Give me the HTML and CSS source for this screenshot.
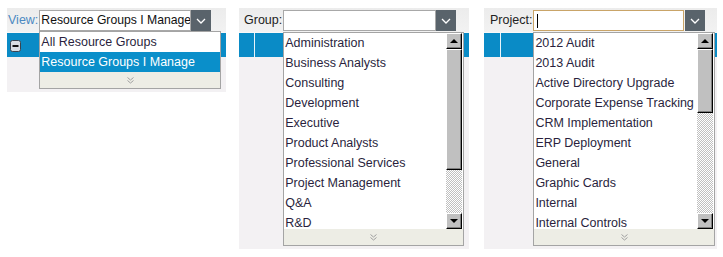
FILE: index.html
```html
<!DOCTYPE html>
<html lang="en">
<head>
    <meta charset="UTF-8">
    <title>Resource filters</title>
    <link rel="stylesheet" href="styles.css">
</head>
<body>
    <div class="page">
        <!-- view picker -->
        <div class="panel panel-view">
            <div class="toolbar">
                <span class="label label-view">View:</span>
                <div class="combo">
                    <div class="combo-input">Resource Groups I Manage</div>
                    <div class="combo-btn">
                        <svg width="10" height="6" viewBox="0 0 10 6"><path d="M1 1 L5 5 L9 1" fill="none" stroke="#fff" stroke-width="1.3"/></svg>
                    </div>
                    <div class="dropdown dropdown-view">
                        <div class="item">All Resource Groups</div>
                        <div class="item selected">Resource Groups I Manage</div>
                        <div class="more">
                            <svg width="7" height="7" viewBox="0 0 7 7"><path d="M0.5 0.5 L3.5 3 L6.5 0.5 M0.5 3.5 L3.5 6 L6.5 3.5" fill="none" stroke="#a0a0a0" stroke-width="1"/></svg>
                        </div>
                    </div>
                </div>
            </div>
            <div class="grid-row">
                <svg class="toggle" width="11" height="12" viewBox="0 0 11 12">
                    <rect x="0.5" y="0.5" width="10" height="11" rx="2" fill="#d8dde2" stroke="#3a4450"/>
                    <rect x="2.5" y="5" width="6" height="2" fill="#111"/>
                </svg>
            </div>
            <div class="panel-body short"></div>
        </div>

        <!-- group picker -->
        <div class="panel panel-group">
            <div class="toolbar">
                <span class="label">Group:</span>
                <div class="combo">
                    <div class="combo-input"></div>
                    <div class="combo-btn">
                        <svg width="10" height="6" viewBox="0 0 10 6"><path d="M1 1 L5 5 L9 1" fill="none" stroke="#fff" stroke-width="1.3"/></svg>
                    </div>
                    <div class="dropdown dropdown-list">
                        <div class="list-wrap">
                            <div class="list">
                                <div class="item">Administration</div>
                                <div class="item">Business Analysts</div>
                                <div class="item">Consulting</div>
                                <div class="item">Development</div>
                                <div class="item">Executive</div>
                                <div class="item">Product Analysts</div>
                                <div class="item">Professional Services</div>
                                <div class="item">Project Management</div>
                                <div class="item">Q&amp;A</div>
                                <div class="item">R&amp;D</div>
                            </div>
                            <div class="scrollbar">
                                <div class="sb-btn"><span class="arrow-up"></span></div>
                                <div class="sb-thumb thumb-group"></div>
                                <div class="sb-track"></div>
                                <div class="sb-btn"><span class="arrow-down"></span></div>
                            </div>
                        </div>
                        <div class="more">
                            <svg width="7" height="7" viewBox="0 0 7 7"><path d="M0.5 0.5 L3.5 3 L6.5 0.5 M0.5 3.5 L3.5 6 L6.5 3.5" fill="none" stroke="#a0a0a0" stroke-width="1"/></svg>
                        </div>
                    </div>
                </div>
            </div>
            <div class="grid-row"><span class="cell-first"></span></div>
            <div class="panel-body tall"></div>
        </div>

        <!-- project picker -->
        <div class="panel panel-project">
            <div class="toolbar">
                <span class="label">Project:</span>
                <div class="combo">
                    <div class="combo-input focused"><span class="caret"></span></div>
                    <div class="combo-btn">
                        <svg width="10" height="6" viewBox="0 0 10 6"><path d="M1 1 L5 5 L9 1" fill="none" stroke="#fff" stroke-width="1.3"/></svg>
                    </div>
                    <div class="dropdown dropdown-list">
                        <div class="list-wrap">
                            <div class="list">
                                <div class="item">2012 Audit</div>
                                <div class="item">2013 Audit</div>
                                <div class="item">Active Directory Upgrade</div>
                                <div class="item">Corporate Expense Tracking</div>
                                <div class="item">CRM Implementation</div>
                                <div class="item">ERP Deployment</div>
                                <div class="item">General</div>
                                <div class="item">Graphic Cards</div>
                                <div class="item">Internal</div>
                                <div class="item">Internal Controls</div>
                            </div>
                            <div class="scrollbar">
                                <div class="sb-btn"><span class="arrow-up"></span></div>
                                <div class="sb-thumb thumb-project"></div>
                                <div class="sb-track"></div>
                                <div class="sb-btn"><span class="arrow-down"></span></div>
                            </div>
                        </div>
                        <div class="more">
                            <svg width="7" height="7" viewBox="0 0 7 7"><path d="M0.5 0.5 L3.5 3 L6.5 0.5 M0.5 3.5 L3.5 6 L6.5 3.5" fill="none" stroke="#a0a0a0" stroke-width="1"/></svg>
                        </div>
                    </div>
                </div>
            </div>
            <div class="grid-row"><span class="cell-first"></span></div>
            <div class="panel-body tall"></div>
        </div>
    </div>
</body>
</html>
```

FILE: styles.css
```css
body{
    margin: 0;
    background-color: white;
    font-family: "Liberation Sans", Arial, sans-serif;
    font-size: 12px;
    color: #2a1f3d;
}
.page{
    display: flex;
    align-items: flex-start;
    padding: 8px 0 0 7px;
}
.panel{
    display: flex;
    flex-direction: column;
}
.panel-view{
    width: 219px;
}
.panel-group{
    width: 230px;
    margin-left: 13px;
}
.panel-project{
    width: 233px;
    margin-left: 15px;
}
.toolbar{
    height: 24px;
    display: flex;
    align-items: flex-start;
    background: linear-gradient(#ececec, #f2f2f2);
    border-bottom: 1px solid #f8f8f8;
}
.label{
    margin-top: 5px;
    color: #222;
    font-size: 12.5px;
    white-space: nowrap;
}
.panel-view .label{
    margin-left: 1px;
    margin-right: 1px;
    color: #4c89c2;
}
.panel-group .label{
    margin-left: 5px;
    margin-right: 1px;
}
.panel-project .label{
    margin-left: 6px;
    margin-right: 1px;
}
.combo{
    position: relative;
    display: flex;
    margin-top: 2px;
}
.combo-input{
    width: 150px;
    height: 19px;
    border: 1px solid #a8a8a8;
    background-color: white;
    font-size: 12.5px;
    line-height: 19px;
    padding-left: 1px;
    box-sizing: content-box;
    white-space: nowrap;
    overflow: hidden;
}
.panel-view .combo-input{
    width: 149px;
    color: #111;
    font-size: 12.2px;
}
.combo-input.focused{
    border-color: #c9a468;
    width: 148px;
}
.caret{
    display: inline-block;
    width: 1px;
    height: 14px;
    margin: 3px 0 0 2px;
    background-color: #000;
    vertical-align: top;
}
.combo-btn{
    width: 20px;
    height: 21px;
    background-color: #59636b;
    display: flex;
    align-items: center;
    justify-content: center;
}
.panel-project .combo-btn{
    margin-left: 1px;
}
.dropdown{
    position: absolute;
    left: 0;
    top: 21px;
    border: 1px solid #a4a4a4;
    background-color: white;
    z-index: 2;
}
.dropdown-view{
    width: 180px;
}
.dropdown-list{
    top: 22px;
    width: 179px;
}
.panel-project .dropdown-list{
    width: 180px;
}
.item{
    height: 20px;
    line-height: 20px;
    padding-left: 1px;
    font-size: 12.5px;
    white-space: nowrap;
}
.item.selected{
    background-color: #0a8fca;
    color: white;
}
.more{
    height: 16px;
    background-color: #ededE5;
    display: flex;
    align-items: center;
    justify-content: center;
}
.list-wrap{
    display: flex;
    height: 196px;
    overflow: hidden;
}
.list{
    flex: 1;
}
.scrollbar{
    width: 16px;
    display: flex;
    flex-direction: column;
    border-right: 1px solid #fff;
}
.sb-btn{
    height: 16px;
    box-sizing: border-box;
    background-color: #c0c0c0;
    border-top: 1px solid #fff;
    border-left: 1px solid #fff;
    border-right: 1px solid #000;
    border-bottom: 1px solid #000;
    box-shadow: inset -1px -1px 0 #808080;
    display: flex;
    align-items: center;
    justify-content: center;
}
.arrow-up{
    width: 0;
    height: 0;
    border-left: 4px solid transparent;
    border-right: 4px solid transparent;
    border-bottom: 4px solid #000;
}
.arrow-down{
    width: 0;
    height: 0;
    border-left: 4px solid transparent;
    border-right: 4px solid transparent;
    border-top: 4px solid #000;
}
.sb-thumb{
    box-sizing: border-box;
    background-color: #c0c0c0;
    border-top: 1px solid #fff;
    border-left: 1px solid #fff;
    border-right: 1px solid #000;
    border-bottom: 1px solid #000;
    box-shadow: inset -1px -1px 0 #808080;
}
.thumb-group{
    height: 121px;
}
.thumb-project{
    height: 64px;
}
.sb-track{
    flex: 1;
    background: repeating-conic-gradient(#c0c0c0 0 25%, #fff 0 50%) 0 0 / 2px 2px;
}
.grid-row{
    height: 24px;
    background-color: #0a8bc6;
    display: flex;
    align-items: center;
}
.toggle{
    margin-left: 3px;
    margin-top: 1px;
}
.cell-first{
    width: 15px;
    height: 24px;
    border-right: 1px solid #e8f4fa;
}
.panel-project .cell-first{
    width: 16px;
}
.panel-body{
    background-color: #f3f1f3;
}
.panel-body.short{
    height: 35px;
}
.panel-body.tall{
    height: 192px;
}
```
